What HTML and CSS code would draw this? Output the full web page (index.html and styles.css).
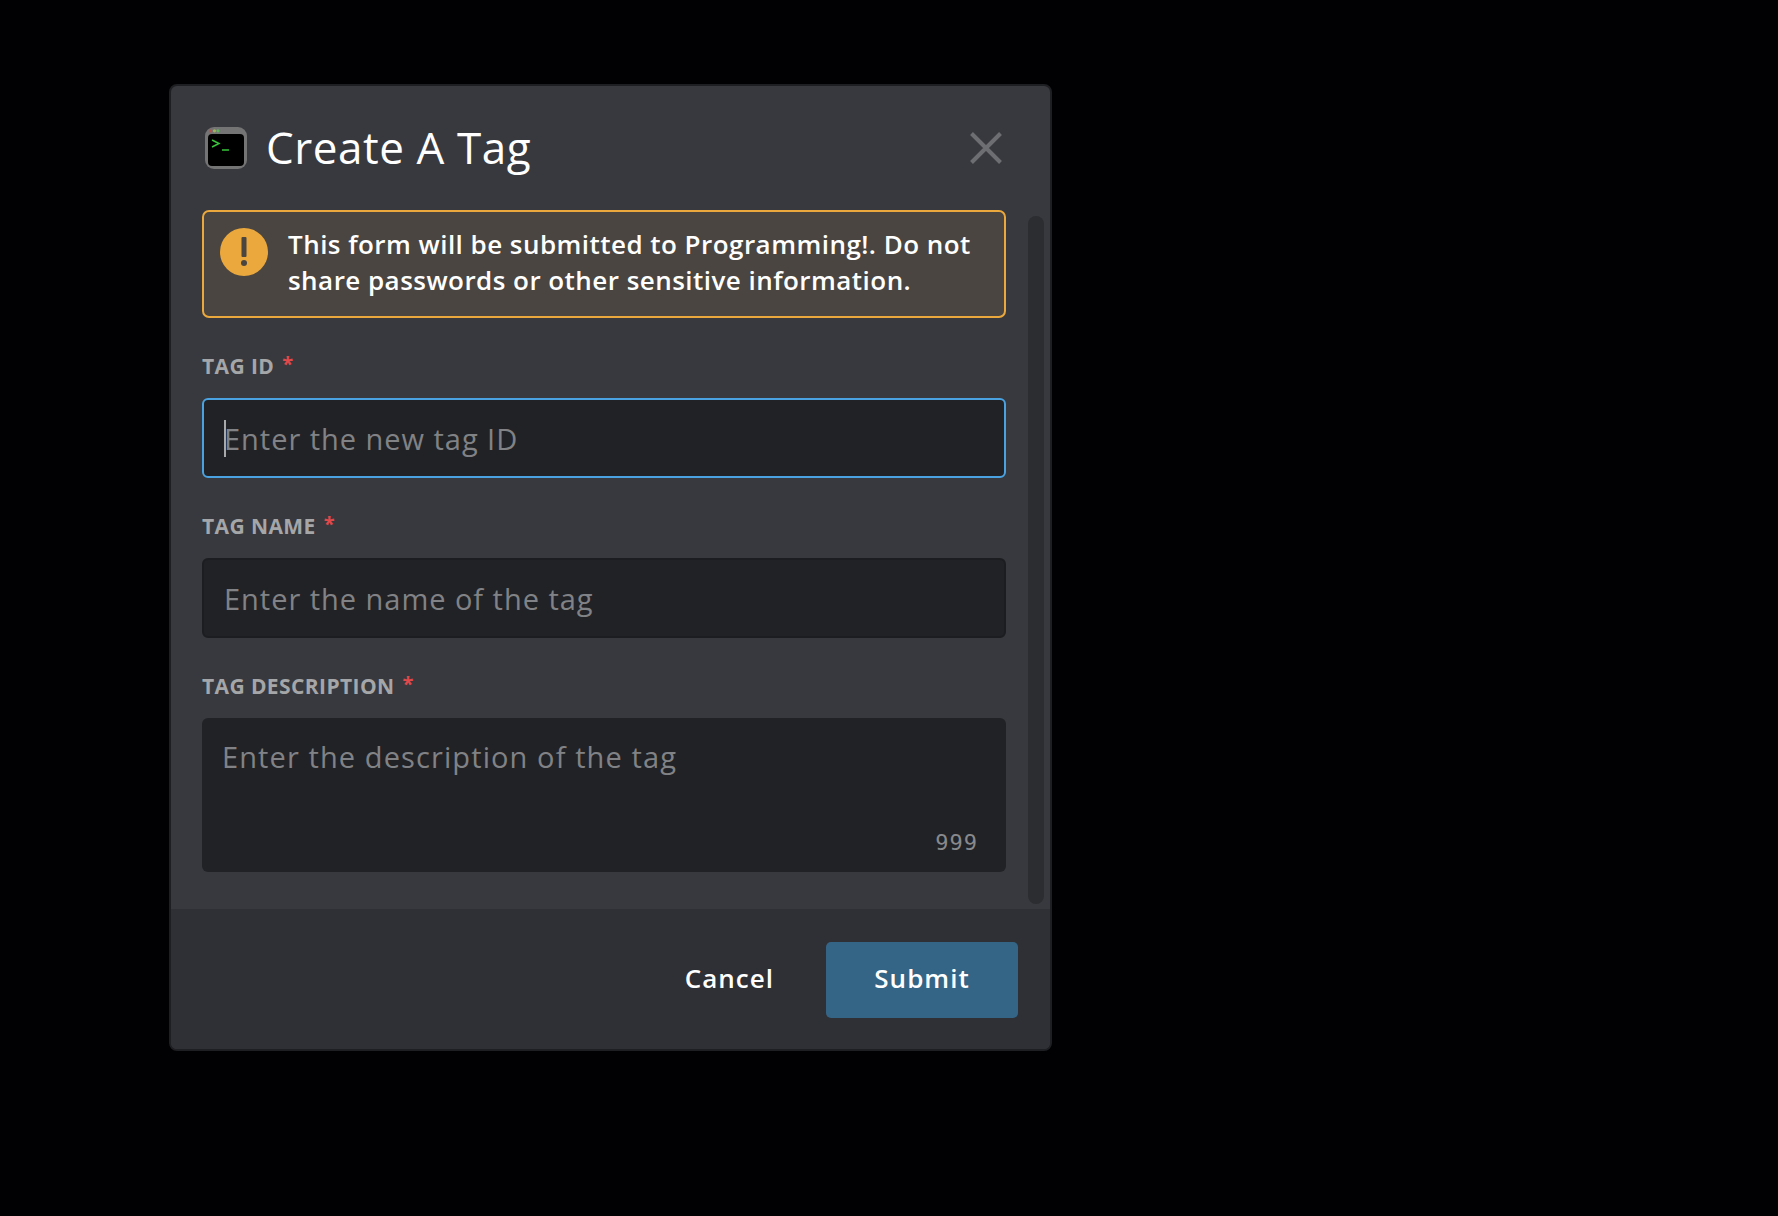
FILE: index.html
```html
<!DOCTYPE html>
<html lang="en">
<head>
<meta charset="utf-8">
<title>Create A Tag</title>
<link rel="stylesheet" href="styles.css">
</head>
<body>
<div class="modal">
  <header class="modal-header">
    <svg class="app-icon" viewBox="0 0 42 42" aria-hidden="true">
      <rect x="0" y="0" width="42" height="42" rx="9" fill="#747474"/>
      <rect x="3" y="7" width="36" height="32" rx="4" fill="#000"/>
      <circle cx="5.5" cy="4" r="1.6" fill="#b5544c"/>
      <circle cx="9.5" cy="3.8" r="1.6" fill="#a3b25a"/>
      <circle cx="13" cy="3.8" r="1.6" fill="#5fb65a"/>
      <path d="M7 13l7 3.5-7 3.5" fill="none" stroke="#37c43a" stroke-width="1.5"/>
      <path d="M17 23h7" fill="none" stroke="#37c43a" stroke-width="1.5"/>
    </svg>
    <h1 class="title">Create A Tag</h1>
    <button class="close" type="button" aria-label="Close">
      <svg viewBox="0 0 32 32" aria-hidden="true"><path d="M1.5 1.5l29 29M30.5 1.5l-29 29" fill="none" stroke="#6d6e72" stroke-width="4"/></svg>
    </button>
  </header>
  <div class="modal-body">
    <form class="form">
      <div class="alert">
        <svg class="alert-icon" viewBox="0 0 48 48" aria-hidden="true">
          <circle cx="24" cy="24" r="24" fill="#eba83c"/>
          <rect x="21.500" y="9" width="5" height="20" rx="1" fill="#4a4540"/>
          <circle cx="24" cy="35" r="3" fill="#4a4540"/>
        </svg>
        <p class="alert-text">This form will be submitted to Programming!. Do not share passwords or other sensitive information.</p>
      </div>
      <label class="label" for="tag-id">TAG ID<span class="req">*</span></label>
      <div class="field">
        <input class="input input-focus" id="tag-id" type="text" placeholder="Enter the new tag ID">
        <span class="caret"></span>
      </div>
      <label class="label" for="tag-name">TAG NAME<span class="req">*</span></label>
      <div class="field">
        <input class="input" id="tag-name" type="text" placeholder="Enter the name of the tag">
      </div>
      <label class="label" for="tag-desc">TAG DESCRIPTION<span class="req">*</span></label>
      <div class="field">
        <textarea class="textarea" id="tag-desc" placeholder="Enter the description of the tag"></textarea>
        <span class="counter">999</span>
      </div>
    </form>
    <div class="scrollbar"></div>
  </div>
  <footer class="modal-footer">
    <button class="btn-cancel" type="button">Cancel</button>
    <button class="btn-submit" type="button">Submit</button>
  </footer>
</div>
</body>
</html>
```
FILE: styles.css
```css
* { box-sizing: border-box; }
html, body { margin: 0; height: 100%; }
body {
  background: #010103;
  padding: 84px 0 0 169px;
  font-family: "Open Sans", "Liberation Sans", sans-serif;
  overflow: hidden;
}
.modal {
  width: 883px;
  height: 967px;
  background: #38393e;
  border: 2px solid #1e1f22;
  border-radius: 8px;
  display: flex;
  flex-direction: column;
  overflow: hidden;
}
.modal-header {
  height: 124px;
  flex: none;
  display: flex;
  align-items: center;
  padding: 0 48px 2px 34px;
  position: relative;
}
.app-icon { width: 42px; height: 42px; flex: none; margin: 2px 19px 0 0; }
.title {
  margin: 0;
  font-size: 44px;
  font-weight: 500;
  color: #fff;
  letter-spacing: 0.55px;
  flex: 1;
  line-height: 56px;
}
.close {
  width: 32px;
  height: 32px;
  padding: 0;
  border: 0;
  margin-top: 2px;
  background: none;
  display: block;
}
.close svg { display: block; width: 32px; height: 32px; }
.modal-body {
  flex: 1;
  display: flex;
  align-items: flex-start;
  padding-left: 31px;
  min-height: 0;
}
.form { width: 804px; flex: none; }
.alert {
  height: 108px;
  border: 2px solid #eba83c;
  border-radius: 7px;
  background: #4a4540;
  display: flex;
  padding: 14px 20px 0 16px;
}
.alert-icon { width: 48px; height: 48px; flex: none; margin: 2px 20px 0 0; }
.alert-text {
  margin: 0;
  font-size: 26px;
  line-height: 36px;
  font-weight: 600;
  letter-spacing: 0.46px;
  color: #fff;
}
.label {
  display: block;
  height: 21px;
  margin-top: 38px;
  margin-bottom: 21px;
  font-size: 21px;
  line-height: 21px;
  font-weight: 700;
  letter-spacing: 0.4px;
  color: #a5a6a8;
}
.req { color: #e0484a; margin-left: 8px; font-size: 20px; vertical-align: 3px; line-height: 0; }
.field { position: relative; }
.input {
  display: block;
  width: 100%;
  height: 80px;
  background: #212226;
  border: 2px solid #1c1d20;
  border-radius: 6px;
  padding: 0 20px;
  font: 400 29px "Open Sans", "Liberation Sans", sans-serif;
  letter-spacing: 0.97px;
  color: #fff;
  outline: none;
}
.input-focus { border-color: #4aa3e0; }
.input::placeholder, .textarea::placeholder { color: #818285; opacity: 1; }
.caret {
  position: absolute;
  left: 22px;
  top: 22px;
  width: 2px;
  height: 37px;
  background: #a8a9ab;
}
.textarea {
  display: block;
  width: 100%;
  height: 154px;
  background: #212226;
  border: 0;
  border-radius: 6px;
  padding: 20px 20px;
  font: 400 29px/38px "Open Sans", "Liberation Sans", sans-serif;
  letter-spacing: 1.1px;
  color: #fff;
  outline: none;
  resize: none;
}
.counter {
  position: absolute;
  right: 28px;
  bottom: 16px;
  font: 400 22px/26px "DejaVu Sans Mono", monospace;
  letter-spacing: 1px;
  color: #88898c;
}
.scrollbar {
  width: 16px;
  height: 688px;
  margin: 6px 0 0 22px;
  background: #2c2d31;
  border-radius: 8px;
  flex: none;
}
.modal-footer {
  height: 140px;
  flex: none;
  background: #2f3035;
  display: flex;
  align-items: center;
  justify-content: flex-end;
  padding: 2px 32px 0 0;
}
.btn-cancel, .btn-submit {
  border: 0;
  background: none;
  color: #fff;
  font: 600 26px "Open Sans", "Liberation Sans", sans-serif;
  letter-spacing: 1px;
  padding: 0 0 4px;
}
.btn-cancel { margin-right: 52px; }
.btn-submit {
  width: 192px;
  height: 76px;
  background: #356586;
  border-radius: 5px;
}
```
